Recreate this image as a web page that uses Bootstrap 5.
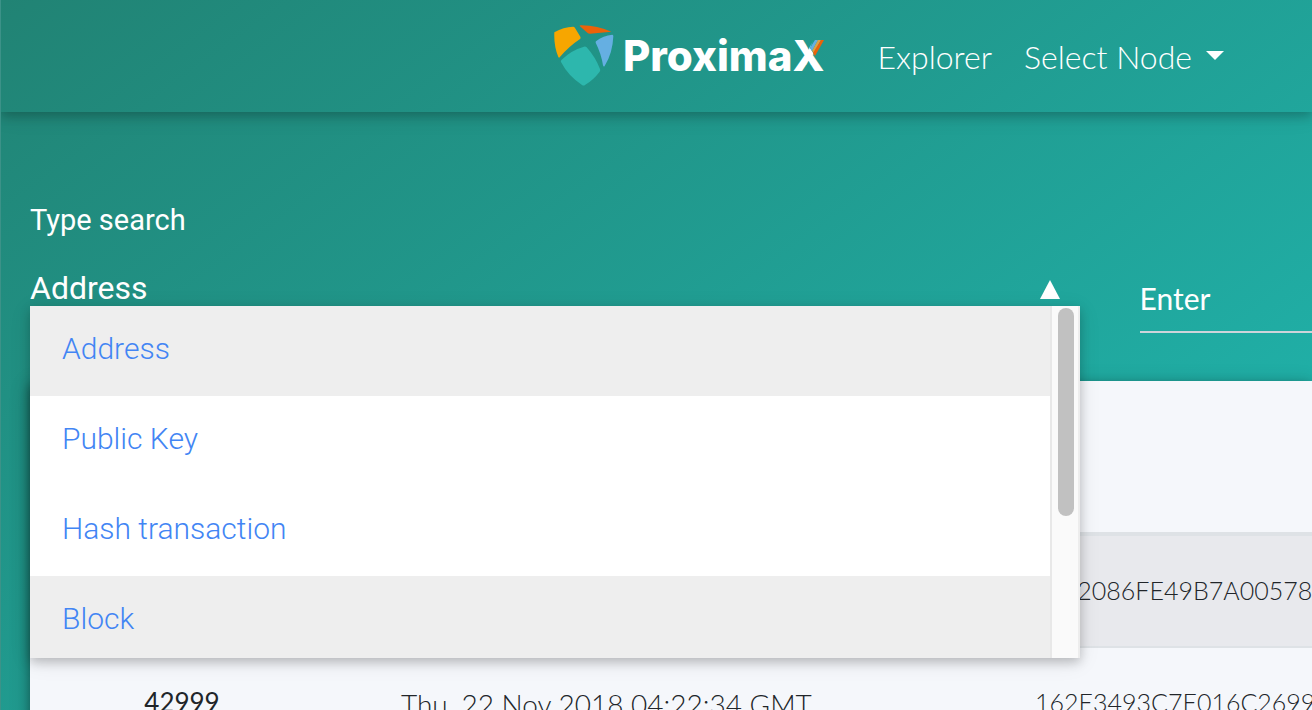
<!DOCTYPE html>
<html lang="en">
<head>
<meta charset="utf-8">
<meta name="viewport" content="width=device-width, initial-scale=1">
<title>ProximaX Explorer</title>
<link href="https://cdn.jsdelivr.net/npm/bootstrap@5.3.0/dist/css/bootstrap.min.css" rel="stylesheet">
<style>
body { font-family: Lato, sans-serif; font-size: 25px; font-weight: 300; color: #212529; overflow: hidden; min-height: 100vh;
  background: linear-gradient(144deg, #218374 0%, #20b2aa 84%); border-left: 1px solid #3c9288; }
.topbar { height: 112px; padding: 0 88px 0 0; box-shadow: 0 4px 10px rgba(0,0,0,.2), 0 4px 20px rgba(0,0,0,.1); }
.topbar .nav-link { color: #fff; font-size: 32px; line-height: 48px; padding: 2px 0 0; }
.topbar .dropdown-toggle::after { border-top-width: 9px; border-left-width: 9px; border-right-width: 9px; margin-left: 14px; vertical-align: 9px; }
.brand { gap: 9px; margin-right: 53px; color: #fff; }
.brand-word { font-family: Inter, sans-serif; font-weight: 800; font-size: 42px; line-height: 48px; }
.brand-x { position: relative; display: inline-block; }
.brand-x svg { position: absolute; right: 0; top: 8px; }
.search { padding: 88px 0 0 29px; gap: 60px; }
.type-col { flex: 0 0 80vw; position: relative; }
.type-col label { font-family: Roboto, sans-serif; font-weight: 400; font-size: 29px; line-height: 40px; color: #fff; }
.type-select { font-family: Roboto, sans-serif; font-weight: 400; font-size: 32px; line-height: 36px; color: #fff; background: transparent;
  border: 0; border-radius: 0; padding: 0; appearance: none; display: block; width: 100%; height: 36px; margin-top: 30px; outline: 0; }
.select-caret { position: absolute; right: 20px; top: 80px; }
.type-menu { position: absolute; z-index: 5; left: 0; right: 0; top: 106px; height: 352px; overflow: hidden; background: #fff;
  box-shadow: 0 4px 10px rgba(0,0,0,.2), 0 4px 20px rgba(0,0,0,.1); }
.type-menu .list-group-item { font-family: Roboto, sans-serif; font-weight: 300; font-size: 30px; line-height: 46px; height: 90px;
  padding: 20px 32px 24px; border: 0; color: #4285f4; background: #fff; flex: none; }
.type-menu .list-group-item.lit { background: #eee; }
.track { flex: 0 0 30px; background: #fafafa; border-left: 2px solid #e8e8e8; border-right: 2px solid #ededed; padding: 2px 4px 0 6px; }
.thumb { width: 16px; height: 208px; border-radius: 8px; background: #c1c1c1; }
.query { padding-top: 77px; }
.query input { background: transparent; border: 0; border-bottom: 2px solid #ced4da; border-radius: 0; color: #fff; font-size: 30px; line-height: 40px;
  padding: 0 0 13px; height: 56px; width: 100%; box-shadow: none; font-weight: 400; }
.query input::placeholder { color: #fff; opacity: 1; }
.panel { margin: 48px 0 0 29px; background: #f5f7fb; box-shadow: 0 4px 10px rgba(0,0,0,.35), 0 4px 20px rgba(0,0,0,.2); }
.blocks { --bs-table-bg: transparent; width: 100%; min-width: 1600px; margin: 0; table-layout: fixed; white-space: nowrap; }
.blocks > thead > tr > th { height: 153px; padding: 0; border-bottom: 4px solid #dee2e6; }
.blocks > tbody > tr > * { padding: 34px 0 36px; line-height: 40px; border-bottom: 2px solid #dee2e6; border-top: 0; }
.blocks > tbody > tr:first-child { background: #e8e9ed; }
.blocks > tbody > tr > th { font-weight: 400; font-size: 26px; text-align: center; }
.c-height { width: 304px; }
.c-time { width: 701px; }
.blocks > tbody > tr > .time-cell { padding: 36px 0 34px 67px; font-size: 28px; }
</style>
<script src="https://cdn.jsdelivr.net/npm/bootstrap@5.3.0/dist/js/bootstrap.bundle.min.js"></script>
</head>
<body>
<nav class="topbar d-flex align-items-center justify-content-end">
  <a href="#" class="brand d-flex align-items-center text-decoration-none">
    <svg width="60" height="62" viewBox="14 16 180 186" aria-hidden="true">
      <path fill="#f7a600" d="M15 38Q43 22 71 21Q75 21 77 25L93 51Q95 56 91 59Q58 81 31 113Q29 116 27 112Q13 78 15 38Z"/>
      <path fill="#eb6209" d="M91 19Q90 16 97 17Q145 18 186 36L122 42Q117 42 114 39Z"/>
      <path fill="#65afe2" d="M139 69Q138 65 142 63Q161 48 189 45Q192 45 192 50Q190 101 166 139Q163 143 161 137Q156 103 139 69Z"/>
      <path fill="#2db7ad" d="M35 127Q33 124 37 120Q67 91 104 81Q109 80 112 83Q138 112 152 148Q154 152 151 156Q132 181 107 196Q103 199 98 196Q56 168 35 127Z"/>
    </svg>
    <span class="brand-word">Proxima<span class="brand-x">X<svg width="14" height="16" viewBox="0 0 14 16" aria-hidden="true"><path fill="#209a8e" d="M3 0H14L5 16 0 8Z"/><path fill="#65afe2" d="M5 0H8L2 11 0 8Z"/><path fill="#d9a24a" d="M8 0H11L4 13 2 11Z"/><path fill="#eb6209" d="M11 0H14L5 16 3 13Z"/></svg></span></span>
  </a>
  <a class="nav-link me-4" href="#">Explorer</a>
  <a class="nav-link dropdown-toggle ms-2" href="#" role="button">Select Node</a>
</nav>
<main>
  <form class="search d-flex">
    <div class="type-col">
      <label for="type" class="d-block">Type search</label>
      <select id="type" class="type-select"><option>Address</option><option>Public Key</option><option>Hash transaction</option><option>Block</option></select>
      <svg class="select-caret" width="20" height="20" viewBox="0 0 20 20" aria-hidden="true"><path fill="#fff" d="M10 0L20 19H0Z"/></svg>
      <div class="type-menu d-flex">
        <div class="list-group list-group-flush flex-grow-1">
          <button type="button" class="list-group-item list-group-item-action lit">Address</button>
          <button type="button" class="list-group-item list-group-item-action">Public Key</button>
          <button type="button" class="list-group-item list-group-item-action">Hash transaction</button>
          <button type="button" class="list-group-item list-group-item-action lit">Block</button>
        </div>
        <div class="track"><div class="thumb"></div></div>
      </div>
    </div>
    <div class="query flex-grow-1"><input type="text" placeholder="Enter" aria-label="Enter"></div>
  </form>
  <section class="panel">
    <table class="table blocks">
      <colgroup><col class="c-height"><col class="c-time"><col></colgroup>
      <thead><tr><th aria-label="Height"></th><th aria-label="Timestamp"></th><th aria-label="Hash"></th></tr></thead>
      <tbody>
        <tr><th></th><td class="time-cell"></td><td>FFF2086FE49B7A00578</td></tr>
        <tr><th>42999</th><td class="time-cell">Thu, 22 Nov 2018 04:22:34 GMT</td><td>162E3493C7E016C2699</td></tr>
      </tbody>
    </table>
  </section>
</main>
</body>
</html>
